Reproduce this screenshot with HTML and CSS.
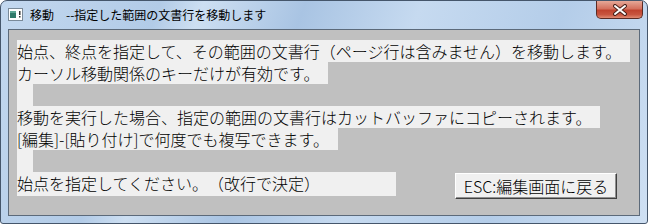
FILE: index.html
```html
<!DOCTYPE html>
<html lang="ja">
<head>
    <meta charset="UTF-8">
    <title>移動</title>
    <link rel="stylesheet" href="styles.css">
</head>
<body>
    <div class="window">
        <div class="titlebar">
            <svg class="app-icon" width="15" height="13" viewBox="0 0 15 13">
                <rect x="0.5" y="0.5" width="14" height="12" fill="#ffffff" stroke="#7a8a99"/>
                <rect x="2" y="3" width="6" height="7" fill="#2f7a6a"/>
                <rect x="2" y="3" width="6" height="2" fill="#5fa896"/>
                <rect x="11" y="3" width="1.5" height="4" fill="#333"/>
                <rect x="11" y="8" width="1.5" height="1.5" fill="#333"/>
            </svg>
            <span class="title">移動　--指定した範囲の文書行を移動します</span>
            <div class="close-btn">
                <svg width="16" height="12" viewBox="0 0 16 12">
                    <path d="M3 2 L13 10 M13 2 L3 10" stroke="#4a2018" stroke-width="4" stroke-linecap="round"/>
                    <path d="M3 2 L13 10 M13 2 L3 10" stroke="#ffffff" stroke-width="2" stroke-linecap="round"/>
                </svg>
            </div>
        </div>
        <div class="client">
            <div class="line"><span>始点、終点を指定して、その範囲の文書行（ページ行は含みません）を移動します。</span></div>
            <div class="line"><span>カーソル移動関係のキーだけが有効です。</span></div>
            <div class="line"><span class="blank"></span></div>
            <div class="line"><span>移動を実行した場合、指定の範囲の文書行はカットバッファにコピーされます。</span></div>
            <div class="line"><span>[編集]-[貼り付け]で何度でも複写できます。</span></div>
            <div class="line"><span class="blank"></span></div>
            <div class="prompt-row">
                <div class="line prompt"><span>始点を指定してください。（改行で決定）</span></div>
                <button class="esc-btn">ESC:編集画面に戻る</button>
            </div>
        </div>
    </div>
</body>
</html>
```

FILE: styles.css
```css
body {
    margin: 0;
    padding: 0;
    background-color: #ffffff;
    font-family: "Noto Sans CJK JP", "Noto Sans", sans-serif;
}

.window {
    width: 648px;
    height: 224px;
    box-sizing: border-box;
    border: 1px solid #45566b;
    border-radius: 7px 7px 3px 3px;
    background: linear-gradient(110deg, #c3d8ef 0%, #b2cbe7 22%, #cddff2 28%, #a9c4e3 42%, #c6daf0 58%, #b4cde9 78%, #cfe0f3 100%);
    display: flex;
    flex-direction: column;
    overflow: hidden;
}

.titlebar {
    height: 28px;
    display: flex;
    align-items: flex-start;
    padding-left: 7px;
}

.app-icon {
    margin-top: 7px;
}

.title {
    margin-left: 7px;
    margin-top: 7px;
    font-size: 12px;
    line-height: 14px;
    color: #000;
}

.close-btn {
    margin-left: auto;
    margin-right: 4px;
    width: 47px;
    height: 18px;
    box-sizing: border-box;
    border: 1px solid #5b2b24;
    border-top: none;
    border-radius: 0 0 5px 5px;
    background: linear-gradient(#e6a898 0%, #d4715e 45%, #c0432f 55%, #c8553f 80%, #e08a72 100%);
    display: flex;
    align-items: center;
    justify-content: center;
}

.client {
    flex: 1;
    margin: 0 7px 7px 7px;
    box-sizing: border-box;
    border: 1px solid #5c6a7a;
    background-color: #c0c0c0;
    padding: 10px 8px 0 8px;
    font-size: 16px;
    font-weight: 300;
    color: #000;
    text-spacing-trim: space-all;
}

.line {
    height: 22px;
    line-height: 22px;
}

.line span {
    display: inline-block;
    height: 22px;
    background-color: #f0f0f0;
    padding-right: 9px;
    white-space: nowrap;
}

.line .blank {
    width: 16px;
    padding: 0;
}

.prompt-row {
    display: flex;
    align-items: flex-start;
}

.prompt {
    height: 24px;
}

.prompt span {
    width: 379px;
    height: 24px;
    box-sizing: border-box;
}

.esc-btn {
    margin-left: auto;
    margin-right: 14px;
    margin-top: 1px;
    width: 162px;
    height: 26px;
    padding: 0;
    font-family: "Noto Sans CJK JP", "Noto Sans", sans-serif;
    font-size: 16px;
    font-weight: 300;
    line-height: 22px;
    color: #000;
    background-color: #f0f0f0;
    border: 1px solid;
    border-color: #ffffff #404040 #404040 #ffffff;
    box-shadow: inset -1px -1px 0 #909090;
}
```
